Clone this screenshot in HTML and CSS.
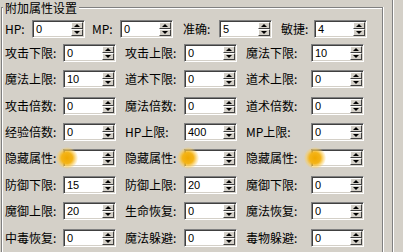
FILE: index.html
```html
<!DOCTYPE html>
<html lang="zh">
<head>
    <meta charset="UTF-8">
    <title>附加属性设置</title>
    <link rel="stylesheet" href="styles.css">
</head>
<body>
    <div class="window">
        <div class="group">
            <span class="group-title">附加属性设置</span>
            <div class="rows">
                <div class="row row-top">
                    <div class="field f-hp"><span class="lbl">HP:</span><div class="spin"><span class="val">0</span><span class="btns"><i class="up"></i><i class="down"></i></span></div></div>
                    <div class="field f-mp"><span class="lbl">MP:</span><div class="spin"><span class="val">0</span><span class="btns"><i class="up"></i><i class="down"></i></span></div></div>
                    <div class="field f-acc"><span class="lbl">准确:</span><div class="spin"><span class="val">5</span><span class="btns"><i class="up"></i><i class="down"></i></span></div></div>
                    <div class="field f-agi"><span class="lbl">敏捷:</span><div class="spin"><span class="val">4</span><span class="btns"><i class="up"></i><i class="down"></i></span></div></div>
                </div>
                <div class="row row3">
                    <div class="field"><span class="lbl">攻击下限:</span><div class="spin"><span class="val">0</span><span class="btns"><i class="up"></i><i class="down"></i></span></div></div>
                    <div class="field"><span class="lbl">攻击上限:</span><div class="spin"><span class="val">0</span><span class="btns"><i class="up"></i><i class="down"></i></span></div></div>
                    <div class="field"><span class="lbl">魔法下限:</span><div class="spin"><span class="val">10</span><span class="btns"><i class="up"></i><i class="down"></i></span></div></div>
                </div>
                <div class="row row3">
                    <div class="field"><span class="lbl">魔法上限:</span><div class="spin"><span class="val">10</span><span class="btns"><i class="up"></i><i class="down"></i></span></div></div>
                    <div class="field"><span class="lbl">道术下限:</span><div class="spin"><span class="val">0</span><span class="btns"><i class="up"></i><i class="down"></i></span></div></div>
                    <div class="field"><span class="lbl">道术上限:</span><div class="spin"><span class="val">0</span><span class="btns"><i class="up"></i><i class="down"></i></span></div></div>
                </div>
                <div class="row row3 row-shift">
                    <div class="field"><span class="lbl">攻击倍数:</span><div class="spin"><span class="val">0</span><span class="btns"><i class="up"></i><i class="down"></i></span></div></div>
                    <div class="field"><span class="lbl">魔法倍数:</span><div class="spin"><span class="val">0</span><span class="btns"><i class="up"></i><i class="down"></i></span></div></div>
                    <div class="field"><span class="lbl">道术倍数:</span><div class="spin"><span class="val">0</span><span class="btns"><i class="up"></i><i class="down"></i></span></div></div>
                </div>
                <div class="row row3">
                    <div class="field"><span class="lbl">经验倍数:</span><div class="spin"><span class="val">0</span><span class="btns"><i class="up"></i><i class="down"></i></span></div></div>
                    <div class="field"><span class="lbl">HP上限:</span><div class="spin"><span class="val">400</span><span class="btns"><i class="up"></i><i class="down"></i></span></div></div>
                    <div class="field"><span class="lbl">MP上限:</span><div class="spin"><span class="val">0</span><span class="btns"><i class="up"></i><i class="down"></i></span></div></div>
                </div>
                <div class="row row3">
                    <div class="field"><span class="lbl">隐藏属性:</span><div class="spin"><span class="glow"></span><span class="val"></span><span class="btns"><i class="up"></i><i class="down"></i></span></div></div>
                    <div class="field"><span class="lbl">隐藏属性:</span><div class="spin"><span class="glow"></span><span class="val"></span><span class="btns"><i class="up"></i><i class="down"></i></span></div></div>
                    <div class="field"><span class="lbl">隐藏属性:</span><div class="spin"><span class="glow"></span><span class="val"></span><span class="btns"><i class="up"></i><i class="down"></i></span></div></div>
                </div>
                <div class="row row3 row-shift">
                    <div class="field"><span class="lbl">防御下限:</span><div class="spin"><span class="val">15</span><span class="btns"><i class="up"></i><i class="down"></i></span></div></div>
                    <div class="field"><span class="lbl">防御上限:</span><div class="spin"><span class="val">20</span><span class="btns"><i class="up"></i><i class="down"></i></span></div></div>
                    <div class="field"><span class="lbl">魔御下限:</span><div class="spin"><span class="val">0</span><span class="btns"><i class="up"></i><i class="down"></i></span></div></div>
                </div>
                <div class="row row3">
                    <div class="field"><span class="lbl">魔御上限:</span><div class="spin"><span class="val">20</span><span class="btns"><i class="up"></i><i class="down"></i></span></div></div>
                    <div class="field"><span class="lbl">生命恢复:</span><div class="spin"><span class="val">0</span><span class="btns"><i class="up"></i><i class="down"></i></span></div></div>
                    <div class="field"><span class="lbl">魔法恢复:</span><div class="spin"><span class="val">0</span><span class="btns"><i class="up"></i><i class="down"></i></span></div></div>
                </div>
                <div class="row row3 row-shift">
                    <div class="field"><span class="lbl">中毒恢复:</span><div class="spin"><span class="val">0</span><span class="btns"><i class="up"></i><i class="down"></i></span></div></div>
                    <div class="field"><span class="lbl">魔法躲避:</span><div class="spin"><span class="val">0</span><span class="btns"><i class="up"></i><i class="down"></i></span></div></div>
                    <div class="field"><span class="lbl">毒物躲避:</span><div class="spin"><span class="val">0</span><span class="btns"><i class="up"></i><i class="down"></i></span></div></div>
                </div>
            </div>
        </div>
        <div class="divider"></div>
    </div>
</body>
</html>
```

FILE: styles.css
```css
body {
    margin: 0;
    background-color: #d4d0c8;
    font-family: "Noto Sans CJK SC", sans-serif;
    font-size: 12px;
    color: #000;
    overflow: hidden;
}

.window {
    display: flex;
    width: 403px;
    height: 252px;
    overflow: hidden;
}

.group {
    position: relative;
    box-sizing: border-box;
    width: 382px;
    height: 247px;
    margin: 7px 0 0 1px;
    padding: 12px 0 0 3px;
    border: 1px solid #808080;
    border-bottom: 0;
    box-shadow: inset 1px 1px 0 #fff, 1px 0 0 #fff;
}

.group-title {
    position: absolute;
    top: -8px;
    left: 1px;
    padding: 0 2px;
    line-height: 16px;
    background-color: #d4d0c8;
}

.rows {
    display: flex;
    flex-direction: column;
    gap: 8px;
}

.row {
    display: flex;
    align-items: center;
    height: 18px;
}

.row-top {
    margin-bottom: -2px;
}

.row-shift {
    margin-top: 1px;
}

.field {
    display: flex;
    align-items: center;
}

.field + .field {
    margin-left: 9px;
}

.lbl {
    flex: none;
    white-space: nowrap;
    line-height: 16px;
}

.row3 .field:nth-child(1) .lbl { width: 58px; }
.row3 .field:nth-child(2) .lbl { width: 59px; }
.row3 .field:nth-child(3) .lbl { width: 65px; }

.row-top .f-hp .lbl { width: 27px; }
.row-top .f-mp { margin-left: 7px; }
.row-top .f-mp .lbl { width: 28px; }
.row-top .f-acc { margin-left: 10px; }
.row-top .f-acc .lbl { width: 36px; }
.row-top .f-agi { margin-left: 9px; }
.row-top .f-agi .lbl { width: 33px; }

.spin {
    position: relative;
    box-sizing: border-box;
    display: flex;
    flex: none;
    width: 53px;
    height: 18px;
    padding: 1px;
    background-color: #fff;
    border: 1px solid;
    border-color: #808080 #fff #fff #808080;
    box-shadow: inset 1px 1px 0 #404040, inset -1px -1px 0 #d4d0c8;
}

.val {
    flex: 1;
    padding-left: 2px;
    font-family: "Liberation Sans", Arial, sans-serif;
    font-size: 11px;
    line-height: 14px;
}

.btns {
    display: flex;
    flex-direction: column;
    width: 12px;
}

.btns i {
    flex: 1;
    display: flex;
    align-items: center;
    justify-content: center;
    background-color: #d4d0c8;
    border: 1px solid;
    border-color: #fff #404040 #404040 #fff;
}

.btns i::before {
    content: "";
    border-left: 3px solid transparent;
    border-right: 3px solid transparent;
}

.btns .up::before {
    border-bottom: 3px solid #000;
}

.btns .down::before {
    border-top: 3px solid #000;
}

.glow {
    position: absolute;
    left: -8px;
    top: -3px;
    width: 22px;
    height: 22px;
    border-radius: 50%;
    background: radial-gradient(circle, #f0a800 0, #f4b418 35%, rgba(250, 205, 90, 0.6) 55%, rgba(255, 240, 200, 0) 72%);
}

.divider {
    width: 0;
    margin-left: 9px;
    border-left: 1px solid #808080;
    border-right: 1px solid #fff;
}
```
